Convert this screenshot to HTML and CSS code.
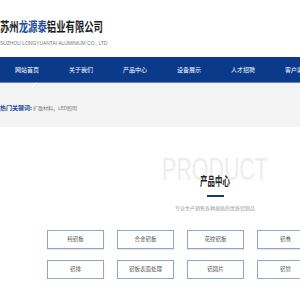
FILE: index.html
```html
<!DOCTYPE html>
<html lang="zh-CN">
<head>
<meta charset="utf-8">
<title>苏州龙源泰铝业有限公司</title>
<link rel="stylesheet" href="styles.css">
</head>
<body>
<div class="page">
  <header class="header">
    <div class="logo">
      <div class="logo-title">苏州<span class="blue">龙源泰</span>铝业有限公司</div>
      <div class="logo-sub">SUZHOU LONGYUANTAI ALUMINIUM CO., LTD</div>
    </div>
  </header>
  <nav class="nav">
    <a class="nav-item">网站首页</a>
    <a class="nav-item">关于我们</a>
    <a class="nav-item">产品中心</a>
    <a class="nav-item">设备展示</a>
    <a class="nav-item">人才招聘</a>
    <a class="nav-item">客户案例</a>
    <a class="nav-item">新闻中心</a>
    <a class="nav-item">联系我们</a>
  </nav>
  <section class="band">
    <svg class="arrow" width="8" height="12" viewBox="0 0 8 12"><polyline points="6,1 1.5,6 6,11" fill="none" stroke="#ffffff" stroke-width="1.2"/><polyline points="6.5,1.5 2,6.5 6.5,11.5" fill="none" stroke="#dcdcdc" stroke-width="0.6"/></svg>
    <div class="keywords"><span class="kw-label">热门关键词:</span><span class="kw-list">扩散材料，LED照明</span></div>
  </section>
  <section class="products">
    <div class="head">
      <div class="watermark">PRODUCT</div>
      <h2 class="title">产品中心</h2>
      <div class="bar"></div>
      <p class="desc">专业生产销售各种规格的优质铝制品</p>
    </div>
    <div class="grid">
      <a class="cat">纯铝板</a>
      <a class="cat">合金铝板</a>
      <a class="cat">花纹铝板</a>
      <a class="cat">铝卷</a>
      <a class="cat">铝带</a>
      <a class="cat">铝排</a>
      <a class="cat">铝板表面处理</a>
      <a class="cat">铝圆片</a>
      <a class="cat">铝管</a>
      <a class="cat">铝箔</a>
    </div>
  </section>
</div>
</body>
</html>
```
FILE: styles.css
```css
html, body {
  margin: 0;
  padding: 0;
  overflow: hidden;
  background: #ffffff;
}
.page {
  width: 430px;
  font-family: "Noto Sans CJK SC", "Liberation Sans", sans-serif;
}
.header {
  height: 57px;
}
.logo {
  padding-top: 12px;
}
.logo-title {
  display: inline-block;
  font-size: 13px;
  line-height: 14px;
  font-weight: bold;
  color: #1c1c1c;
  white-space: nowrap;
  transform: scaleX(0.72);
  transform-origin: left center;
}
.blue {
  color: #1d4c9b;
}
.logo-sub {
  font-family: "Liberation Sans", sans-serif;
  font-size: 5px;
  line-height: 6px;
  margin-top: 4px;
  color: #7a7a7a;
  white-space: nowrap;
  letter-spacing: -0.05px;
}
.nav {
  display: flex;
  height: 25px;
  background: #0b3a8b;
  border-bottom: 1px solid #5d82c0;
}
.nav-item {
  width: 54px;
  flex: none;
  text-align: center;
  line-height: 25px;
  font-size: 6px;
  color: #ffffff;
}
.band {
  position: relative;
  height: 44px;
  background: #f4f4f4;
  display: flex;
  align-items: center;
}
.arrow {
  position: absolute;
  left: 31px;
  top: -1px;
}
.keywords {
  white-space: nowrap;
  line-height: 8px;
}
.kw-label {
  font-size: 6px;
  font-weight: bold;
  color: #1d4c9b;
}
.kw-list {
  font-size: 5px;
  color: #777777;
  margin-left: 1px;
}
.products {
  padding-top: 48px;
}
.head {
  position: relative;
  text-align: center;
  margin-left: 215px;
  width: 0;
  display: flex;
  flex-direction: column;
  align-items: center;
}
.watermark {
  position: absolute;
  top: -21px;
  left: 50%;
  transform: translateX(-50%) scaleX(0.69);
  font-family: "Liberation Sans", sans-serif;
  font-size: 31px;
  line-height: 31px;
  color: #ededed;
  white-space: nowrap;
  z-index: 0;
}
.title {
  position: relative;
  margin: 0;
  font-size: 12px;
  line-height: 12px;
  font-weight: bold;
  color: #222222;
  white-space: nowrap;
  transform: scaleX(0.62);
}
.bar {
  position: relative;
  width: 17px;
  height: 2px;
  margin-top: 8px;
  background: #0b3a8b;
}
.desc {
  position: relative;
  margin: 8px 0 0;
  font-size: 5px;
  line-height: 6px;
  color: #9a9a9a;
  white-space: nowrap;
}
.grid {
  display: grid;
  grid-template-columns: repeat(5, 57px);
  column-gap: 13px;
  row-gap: 11px;
  margin: 19px 0 0 47px;
}
.cat {
  height: 17px;
  border: 1px solid #8ea7cc;
  box-shadow: 0 1px 1px rgba(60, 90, 140, 0.15);
  font-size: 5.5px;
  line-height: 17px;
  text-align: center;
  color: #555555;
  white-space: nowrap;
}
```
